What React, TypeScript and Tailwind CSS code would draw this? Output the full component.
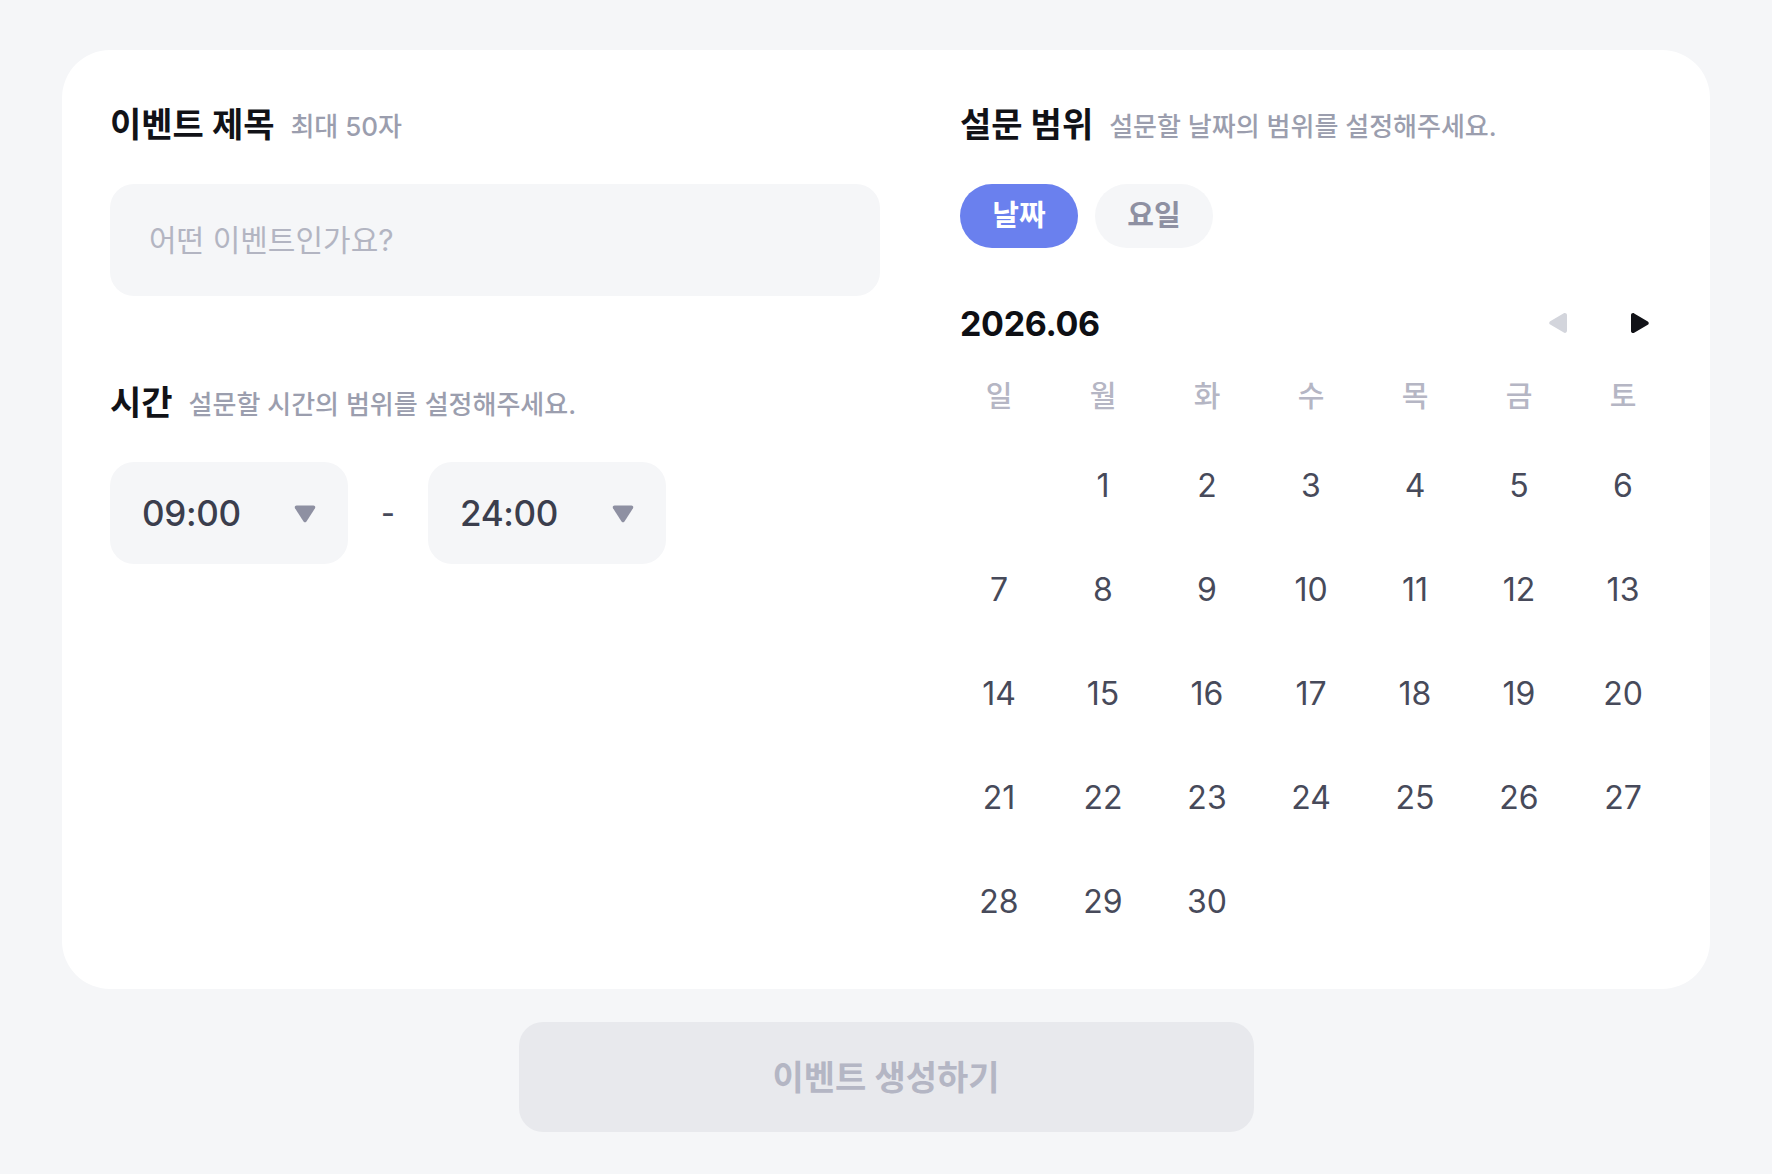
import { useState } from "react";

const FONT = { fontFamily: 'Inter, "Noto Sans CJK KR", "Noto Sans", sans-serif' };

const WEEKDAYS = ["일", "월", "화", "수", "목", "금", "토"];

// June 2026 starts on Monday
const DAYS: (number | null)[] = [null, ...Array.from({ length: 30 }, (_, i) => i + 1)];

function Caret() {
  return (
    <svg width="22" height="19" viewBox="0 0 22 19" className="shrink-0">
      <path d="M2.5 1.5h17c1.4 0 2.2 1.5 1.5 2.7l-8.5 13.4c-.7 1.1-2.3 1.1-3 0L1 4.2C.3 3 1.1 1.5 2.5 1.5z" fill="#8e90a2" />
    </svg>
  );
}

function NavArrow({ dir, color }: { dir: "left" | "right"; color: string }) {
  return (
    <svg width="20" height="22" viewBox="0 0 20 22" className={dir === "left" ? "rotate-180" : ""}>
      <path d="M1 3.2C1 1.5 2.8.5 4.2 1.4l13.6 8c1.3.8 1.3 2.6 0 3.4l-13.6 8C2.8 21.6 1 20.6 1 18.9z" fill={color} />
    </svg>
  );
}

function TimeSelect({ value }: { value: string }) {
  return (
    <button className="flex h-[102px] w-[238px] items-center justify-between rounded-[24px] bg-[#f5f6f8] pl-8 pr-[32px]">
      <span className="text-[35px] font-medium tracking-[-0.01em] text-[#3b3e4d]">{value}</span>
      <Caret />
    </button>
  );
}

function SectionHeader({ title, hint }: { title: string; hint: string }) {
  return (
    <div className="flex h-[52px] items-center gap-4">
      <h2 className="text-[34px] font-bold text-[#111217]">{title}</h2>
      <span className="pt-1 text-[26px] font-medium text-[#9b9eae]">{hint}</span>
    </div>
  );
}

export default function App() {
  const [mode, setMode] = useState<"date" | "weekday">("date");

  return (
    <div style={FONT} className="flex min-h-screen w-full flex-col items-center bg-[#f5f6f8] px-[62px] pt-[50px] pb-[41px]">
      <div className="flex w-full gap-[80px] rounded-[48px] bg-white p-12">
        {/* Left column */}
        <div className="flex flex-1 flex-col">
          <SectionHeader title="이벤트 제목" hint="최대 50자" />
          <input
            placeholder="어떤 이벤트인가요?"
            className="mt-[34px] h-[112px] w-full rounded-[24px] bg-[#f5f6f8] px-[39px] text-[30px] text-[#3b3e4d] outline-none placeholder:text-[#b3b5c2]"
          />

          <div className="mt-[80px]">
            <SectionHeader title="시간" hint="설문할 시간의 범위를 설정해주세요." />
          </div>
          <div className="mt-[34px] flex items-center">
            <TimeSelect value="09:00" />
            <span className="flex w-[80px] justify-center text-[30px] font-medium text-[#474a5a]">-</span>
            <TimeSelect value="24:00" />
          </div>
        </div>

        {/* Right column */}
        <div className="flex w-[702px] shrink-0 flex-col">
          <SectionHeader title="설문 범위" hint="설문할 날짜의 범위를 설정해주세요." />
          <div className="mt-[34px] flex gap-[17px]">
            <button
              onClick={() => setMode("date")}
              className={`h-16 w-[118px] rounded-full text-[29px] font-bold ${mode === "date" ? "bg-[#6a80ee] text-white" : "bg-[#f5f6f8] text-[#8e90a2]"}`}
            >
              날짜
            </button>
            <button
              onClick={() => setMode("weekday")}
              className={`h-16 w-[118px] rounded-full text-[29px] font-bold ${mode === "weekday" ? "bg-[#6a80ee] text-white" : "bg-[#f5f6f8] text-[#8e90a2]"}`}
            >
              요일
            </button>
          </div>

          <div className="mt-[49px] flex h-[52px] items-center justify-between">
            <span className="text-[34px] font-bold tracking-[-0.01em] text-[#0e0f14]">2026.06</span>
            <div className="flex items-center gap-[38px]">
              <button className="flex h-11 w-11 items-center justify-center">
                <NavArrow dir="left" color="#d3d5dc" />
              </button>
              <button className="flex h-11 w-11 items-center justify-center">
                <NavArrow dir="right" color="#111217" />
              </button>
            </div>
          </div>

          <div className="mt-[28px] grid grid-cols-7 gap-x-[26px]">
            {WEEKDAYS.map((d) => (
              <div key={d} className="flex h-10 items-center justify-center text-[29px] font-medium text-[#b5b6c4]">
                {d}
              </div>
            ))}
          </div>

          <div className="mt-[30px] grid grid-cols-7 gap-[26px]">
            {DAYS.map((d, i) => (
              <div key={i} className="flex h-[78px] items-center justify-center text-[32px] text-[#474a5a]">
                {d ?? ""}
              </div>
            ))}
          </div>
        </div>
      </div>

      <button
        disabled
        className="mt-[33px] h-[110px] w-[735px] rounded-[24px] bg-[#e8e9ed] text-[34px] font-bold text-[#b4b6c4]"
      >
        이벤트 생성하기
      </button>
    </div>
  );
}
